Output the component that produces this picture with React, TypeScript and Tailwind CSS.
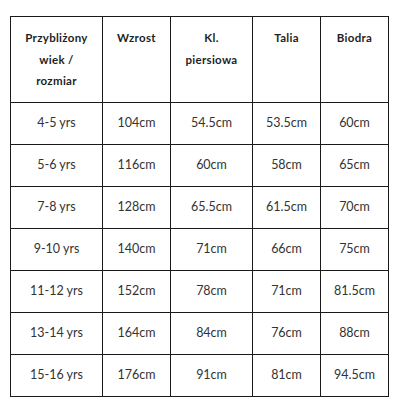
import React from "react";

const rows = [
  ["4-5 yrs", "104cm", "54.5cm", "53.5cm", "60cm"],
  ["5-6 yrs", "116cm", "60cm", "58cm", "65cm"],
  ["7-8 yrs", "128cm", "65.5cm", "61.5cm", "70cm"],
  ["9-10 yrs", "140cm", "71cm", "66cm", "75cm"],
  ["11-12 yrs", "152cm", "78cm", "71cm", "81.5cm"],
  ["13-14 yrs", "164cm", "84cm", "76cm", "88cm"],
  ["15-16 yrs", "176cm", "91cm", "81cm", "94.5cm"],
];

const headers: string[][] = [
  ["Przybliżony", "wiek /", "rozmiar"],
  ["Wzrost"],
  ["Kl.", "piersiowa"],
  ["Talia"],
  ["Biodra"],
];

export default function App() {
  return (
    <div
      className="w-[411px] h-[417px] bg-white pl-[10px] pt-[16px]"
      style={{ fontFamily: "Lato, 'Noto Sans', sans-serif" }}
    >
      <table className="border-collapse table-fixed w-[378px] text-[#2b2b2b]">
        <colgroup>
          <col className="w-[92px]" />
          <col className="w-[68px]" />
          <col className="w-[82px]" />
          <col className="w-[68px]" />
          <col className="w-[68px]" />
        </colgroup>
        <thead>
          <tr className="h-[86px]">
            {headers.map((h, i) => (
              <th
                key={i}
                className="border border-[#1a1a1a] align-top pt-[10px] px-[4px] text-[11.5px] tracking-[0.3px] font-bold leading-[21.5px] text-center text-[#1f1f1f]"
              >
                {h.map((line, li) => (
                  <div key={li}>{line}</div>
                ))}
              </th>
            ))}
          </tr>
        </thead>
        <tbody>
          {rows.map((r, ri) => (
            <tr key={ri} className="h-[42px]">
              {r.map((c, ci) => (
                <td
                  key={ci}
                  className="border border-[#1a1a1a] text-center align-middle text-[12.5px] text-[#333]"
                >
                  {c}
                </td>
              ))}
            </tr>
          ))}
        </tbody>
      </table>
    </div>
  );
}
